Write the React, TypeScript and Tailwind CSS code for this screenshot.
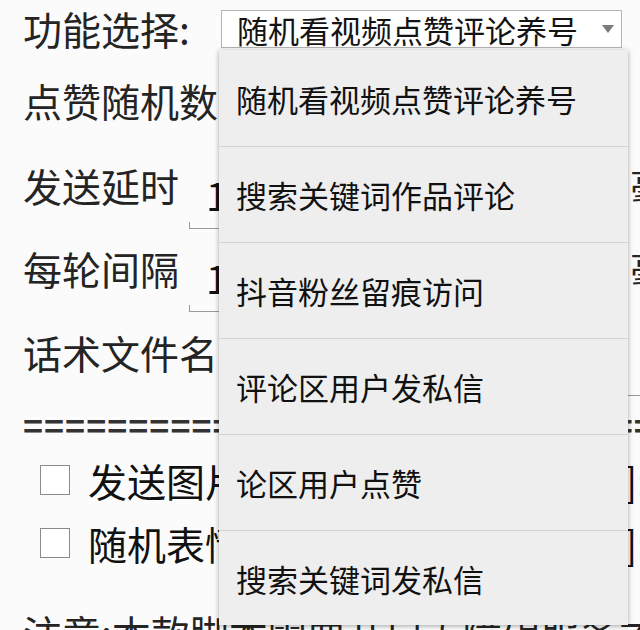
const items = [
  '随机看视频点赞评论养号',
  '搜索关键词作品评论',
  '抖音粉丝留痕访问',
  '评论区用户发私信',
  '论区用户点赞',
  '搜索关键词发私信',
];

const Field = ({ value, width }: { value: string; width: string }) => (
  <div className={`flex flex-col ${width}`}>
    <div className="h-[55px] flex items-center pl-[17px] text-[39px] leading-none text-[#111]">{value}</div>
    <div className="h-[7px] border-x border-b border-[#9a9a9a]" />
  </div>
);

const Check = ({ label, tail }: { label: string; tail: string }) => (
  <div className="flex items-center w-[625px]">
    <div className="ml-[17px] w-[30px] h-[30px] border-[1.5px] border-[#8a8a8a] bg-white shrink-0" />
    <span className="ml-[18px] flex-1 whitespace-nowrap text-[39px] leading-none text-[#111]">{label}</span>
    <span className="text-[39px] leading-none text-[#111]">{tail}</span>
  </div>
);

export default function App() {
  return (
    <div className="relative w-[640px] h-[630px] overflow-hidden bg-[#fbfbfb] text-[#242424] font-['Noto_Sans_CJK_SC','Noto_Sans',sans-serif]">
      <div className="flex flex-col pl-[23px] w-[760px]">
        {/* 功能选择 */}
        <div className="flex items-start h-[64px] pt-[10px]">
          <div className="w-[198px] text-[39px] leading-[48px] -mt-[6px] whitespace-nowrap">功能选择:</div>
          <div className="w-[401px] h-[38px] border border-[#b4b4b4] bg-white flex items-center pl-[15px] pr-[7px]">
            <span className="flex-1 text-[31px] leading-none text-[#141414] whitespace-nowrap">随机看视频点赞评论养号</span>
            <svg width="12" height="8" viewBox="0 0 12 8">
              <path d="M0 0 L12 0 L6 8 Z" fill="#7a7a7a" />
            </svg>
          </div>
        </div>

        <div className="flex items-center h-[72px] text-[39px] leading-none">点赞随机数</div>

        <div className="flex items-center h-[98px]">
          <div className="w-[166px] text-[39px] leading-none">发送延时</div>
          <div className="mt-[26px]">
            <Field value="1000" width="w-[436px]" />
          </div>
          <span className="ml-[5px] text-[39px] leading-none">毫秒</span>
        </div>

        <div className="flex items-center h-[68px]">
          <div className="w-[166px] text-[39px] leading-none">每轮间隔</div>
          <div className="mt-[26px]">
            <Field value="1000" width="w-[436px]" />
          </div>
          <span className="ml-[5px] text-[39px] leading-none">毫秒</span>
        </div>

        <div className="flex items-center h-[100px]">
          <div className="w-[205px] text-[39px] leading-none whitespace-nowrap">话术文件名</div>
          <div className="mt-[26px]">
            <Field value="话术.txt" width="w-[520px]" />
          </div>
        </div>

        <div className="flex items-center h-[46px] overflow-hidden whitespace-nowrap text-[34px] leading-none font-bold text-[#333] tracking-[1px]">
          {'='.repeat(40)}
        </div>

        <div className="flex items-center h-[64px]">
          <Check label="发送图片评论" tail="[图]:" />
        </div>
        <div className="flex items-center h-[62px]">
          <Check label="随机表情评论" tail="[情]:" />
        </div>

        <div className="flex items-center h-[116px] text-[39px] leading-none whitespace-nowrap">
          注意:本款脚本需要开启无障碍服务才能正常运行使用
        </div>
      </div>

      {/* 下拉菜单 */}
      <div className="absolute left-[219px] top-[50px] w-[409px] h-[575px] bg-[#eeeeee] shadow-[0_1px_5px_rgba(0,0,0,0.35)] flex flex-col">
        {items.map((t, i) => (
          <div
            key={t}
            className={`h-[96px] shrink-0 flex items-center pl-[17px] text-[31px] leading-none text-[#111] whitespace-nowrap ${i > 0 ? 'border-t border-[#d2d2d2]' : ''}`}
          >
            {t}
          </div>
        ))}
      </div>
    </div>
  );
}
